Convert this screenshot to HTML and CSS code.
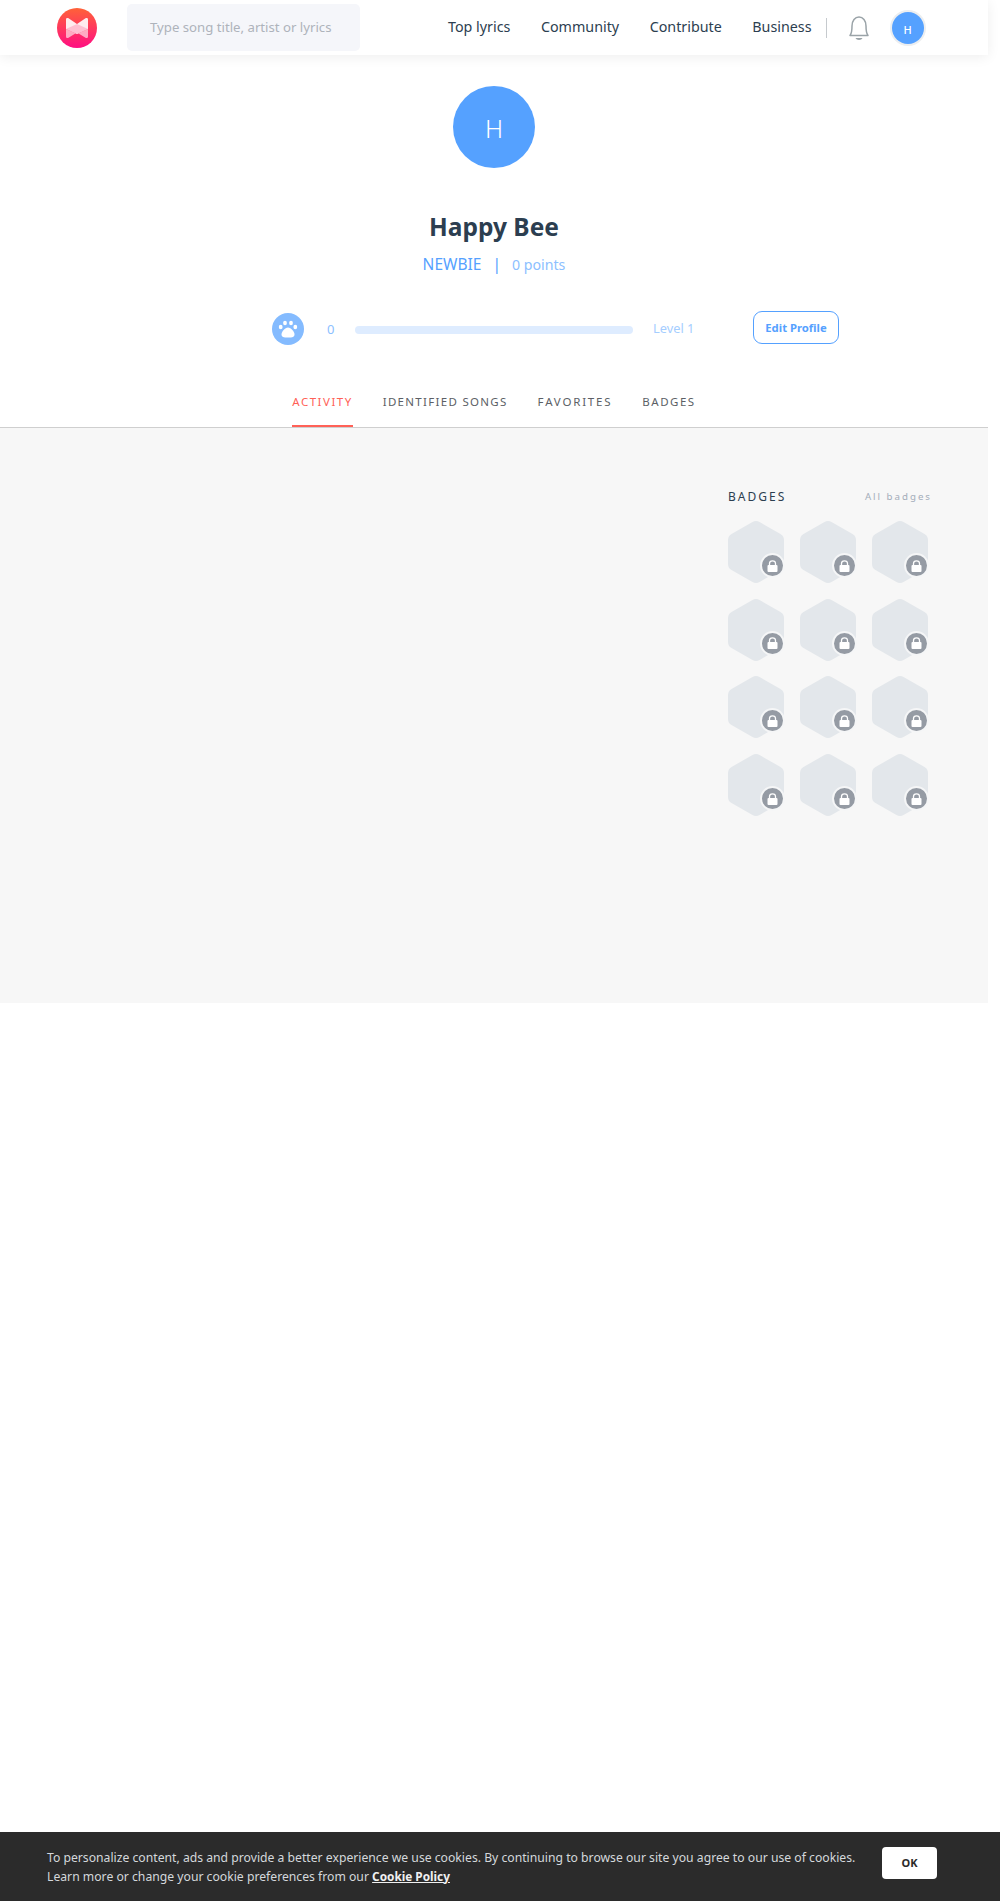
FILE: index.html
```html
<!doctype html>
<html lang="en">
<head>
    <meta charset="UTF-8">
    <title>Happy Bee - Profile</title>
    <link rel="stylesheet" href="styles.css">
</head>
<body>
<div id="page">
    <header id="header">
        <a class="logo" href="#">
            <svg width="40" height="40" viewBox="0 0 40 40">
                <defs>
                    <linearGradient id="logoGrad" x1="0" y1="0" x2="0" y2="1">
                        <stop offset="0" stop-color="#ff6238"/>
                        <stop offset="1" stop-color="#ff0e83"/>
                    </linearGradient>
                </defs>
                <circle cx="20" cy="20" r="20" fill="url(#logoGrad)"/>
                <path d="M9 11.500C9 10 10.500 9.700 11.500 10.300L20 16L28.500 10.300C29.500 9.700 31 10 31 11.500L31 21L20 26L9 21Z" fill="#fff" fill-opacity=".9"/>
                <path d="M9 21L20 26L31 21L31 28.500C31 30 29.500 30.300 28.500 29.700L20 24.500L11.500 29.700C10.500 30.300 9 30 9 28.500Z" fill="#fff" fill-opacity=".6"/>
                <path d="M9 21L20 16L31 21L20 26Z" fill="#ff6f9c" fill-opacity=".35"/>
            </svg>
        </a>
        <div class="search">Type song title, artist or lyrics</div>
        <ul class="nav">
            <li>Top lyrics</li>
            <li>Community</li>
            <li>Contribute</li>
            <li>Business</li>
        </ul>
        <span class="divider"></span>
        <svg class="bell" width="22" height="26" viewBox="0 0 22 26">
            <path d="M2 20.500C4 18 4 16 4 11C4 5.500 7 2 11 2C15 2 18 5.500 18 11C18 16 18 18 20 20.500Z" fill="none" stroke="#9aa3a8" stroke-width="1.500" stroke-linejoin="round"/>
            <path d="M7.500 23L14.500 23C13.500 25.500 8.500 25.500 7.500 23Z" fill="#9aa3a8"/>
        </svg>
        <div class="mini-avatar">H</div>
    </header>

    <section class="profile">
        <div class="avatar">H</div>
        <h1 class="name">Happy Bee</h1>
        <div class="rank">
            <span class="rank-title">NEWBIE</span>
            <span class="rank-sep">|</span>
            <span class="rank-points">0 points</span>
        </div>
        <div class="level">
            <div class="paw">
                <svg width="20" height="18" viewBox="0 0 20 18">
                    <ellipse cx="2.700" cy="7" rx="1.900" ry="2.200" fill="#fff"/>
                    <ellipse cx="7" cy="3" rx="1.900" ry="2.300" fill="#fff"/>
                    <ellipse cx="13" cy="3" rx="1.900" ry="2.300" fill="#fff"/>
                    <ellipse cx="17.300" cy="7" rx="1.900" ry="2.200" fill="#fff"/>
                    <path d="M10 7.500C13 7.500 16.500 11.500 16.500 14.500C16.500 17 14.500 17.500 10 17.500C5.500 17.500 3.500 17 3.500 14.500C3.500 11.500 7 7.500 10 7.500Z" fill="#fff"/>
                </svg>
            </div>
            <span class="level-num">0</span>
            <div class="level-bar"></div>
            <span class="level-name">Level 1</span>
            <a class="edit-btn" href="#">Edit Profile</a>
        </div>
        <ul class="tabs">
            <li class="selected">ACTIVITY</li>
            <li>IDENTIFIED SONGS</li>
            <li>FAVORITES</li>
            <li>BADGES</li>
        </ul>
    </section>

    <section class="content">
        <aside class="side">
            <div class="side-head">
                <span class="side-title">BADGES</span>
                <a class="side-link" href="#">All badges</a>
            </div>
            <div class="badges" id="badges"></div>
        </aside>
    </section>
</div>

<div class="cookie">
    <p>To personalize content, ads and provide a better experience we use cookies. By continuing to browse our site you agree to our use of cookies.<br>Learn more or change your cookie preferences from our <a href="#">Cookie Policy</a></p>
    <button class="ok">OK</button>
</div>

<script>
    var oBadges = document.getElementById("badges");
    var html = "";
    for(var i=0; i<12; i++){
        html += '<div class="badge">'
            + '<svg width="56" height="62" viewBox="0 0 56 62"><path d="M24.500 1L3.500 13Q0 15 0 19L0 43Q0 47 3.500 49L24.500 61Q28 63 31.500 61L52.500 49Q56 47 56 43L56 19Q56 15 52.500 13L31.500 1Q28 -1 24.500 1Z" fill="#e3e7eb"/></svg>'
            + '<span class="lock"><svg width="11" height="12" viewBox="0 0 11 12"><path d="M2.500 5L2.500 3.500C2.500 1.800 3.800 .8 5.500 .8C7.200 .8 8.500 1.800 8.500 3.500L8.500 5" fill="none" stroke="#fff" stroke-width="1.300"/><rect x="0.500" y="5" width="10" height="7" rx="1" fill="#fff"/></svg></span>'
            + '</div>';
    }
    oBadges.innerHTML = html;
</script>
</body>
</html>
```

FILE: styles.css
```css
*{
    padding: 0;
    margin: 0;
    box-sizing: border-box;
}
li{
    list-style: none;
}
a{
    text-decoration: none;
}
html, body{
    height: 100%;
}
body{
    position: relative;
    height: 1901px;
    overflow: hidden;
    background: #fff;
    font-family: "Noto Sans", "Open Sans", sans-serif;
    color: #2c3e50;
}
#page{
    width: 988px;
}

/* header */
#header{
    height: 55px;
    display: flex;
    align-items: center;
    padding-left: 57px;
    background: #fff;
    box-shadow: 0 2px 12px rgba(0,0,0,.07);
}
.logo{
    display: flex;
    width: 40px;
    height: 40px;
}
.search{
    width: 233px;
    height: 47px;
    margin-left: 30px;
    padding-left: 23px;
    line-height: 47px;
    font-size: 13.200px;
    color: #aeb3bb;
    background: #f5f6fa;
    border-radius: 5px;
}
.nav{
    display: flex;
    margin-left: 88px;
    margin-top: -2px;
    gap: 30.500px;
}
.nav li{
    font-size: 14.300px;
    color: #2c3e50;
}
.divider{
    width: 1px;
    height: 20px;
    margin-left: 14px;
    background: #c6cace;
}
.bell{
    margin-left: 21px;
}
.mini-avatar{
    width: 32px;
    height: 32px;
    margin-left: 22px;
    border-radius: 50%;
    background: #55a1ff;
    box-shadow: 0 0 0 2px #eceef0;
    color: #fff;
    font-size: 11px;
    font-weight: 500;
    text-align: center;
    line-height: 35px;
}

/* profile head */
.profile{
    height: 373px;
    padding-top: 31px;
    border-bottom: 1px solid #cfcfcf;
    display: flex;
    flex-direction: column;
    align-items: center;
}
.avatar{
    width: 82px;
    height: 82px;
    border-radius: 50%;
    background: #55a1ff;
    color: #fff;
    font-size: 25px;
    font-weight: 300;
    text-align: center;
    line-height: 84px;
    flex: none;
}
.name{
    margin-top: 41px;
    font-size: 24.500px;
    font-weight: 700;
    line-height: 36px;
    color: #2c3e50;
}
.rank{
    display: flex;
    align-items: baseline;
    margin-top: 9px;
    font-size: 15.500px;
    line-height: 20px;
}
.rank-title{
    color: #55a1ff;
}
.rank-sep{
    margin: 0 11px;
    color: #55a1ff;
}
.rank-points{
    font-size: 14.200px;
    color: #8cc0ff;
}
.level{
    width: 100%;
    display: flex;
    align-items: center;
    margin-top: 37px;
    padding-left: 272px;
    height: 34px;
}
.paw{
    width: 32px;
    height: 32px;
    border-radius: 50%;
    background: #84bbff;
    display: flex;
    align-items: center;
    justify-content: center;
    flex: none;
}
.level-num{
    width: 51px;
    padding-left: 23px;
    font-size: 13px;
    color: #8cc0ff;
}
.level-bar{
    width: 278px;
    height: 8px;
    background: #deecff;
    border-radius: 4px;
    margin-top: 3px;
}
.level-name{
    width: 120px;
    padding-left: 20px;
    margin-top: -2px;
    font-size: 12.800px;
    color: #a5ceff;
}
.edit-btn{
    width: 86px;
    height: 33px;
    margin-top: -2px;
    border: 1px solid #55a1ff;
    border-radius: 9px;
    text-align: center;
    line-height: 31px;
    font-size: 11.300px;
    font-weight: 700;
    color: #55a1ff;
}
.tabs{
    display: flex;
    gap: 30px;
    margin-top: 27px;
}
.tabs li{
    height: 55px;
    padding-top: 20px;
    line-height: 20px;
    font-size: 11.500px;
    letter-spacing: 1.500px;
    color: #5c5f66;
}
.tabs li:nth-child(2){
    letter-spacing: 1.300px;
}
.tabs li:nth-child(3){
    letter-spacing: 1.800px;
}
.tabs .selected{
    color: #ff6157;
    border-bottom: 2px solid #ff6157;
}

/* grey content */
.content{
    height: 575px;
    background: #f7f7f7;
    padding: 59px 0 0 728px;
}
.side{
    width: 204px;
}
.side-head{
    display: flex;
    justify-content: space-between;
    align-items: center;
    height: 18px;
}
.side-title{
    font-size: 12px;
    letter-spacing: 2px;
    color: #2c3e50;
}
.side-link{
    font-size: 9.700px;
    letter-spacing: 2px;
    color: #a4adba;
}
.badges{
    display: grid;
    grid-template-columns: repeat(3, 56px);
    column-gap: 16px;
    row-gap: 15.700px;
    margin-top: 16px;
}
.badge{
    position: relative;
    width: 56px;
    height: 62px;
}
.badge svg{
    display: block;
}
.lock{
    position: absolute;
    left: 32px;
    top: 32px;
    width: 25px;
    height: 25px;
    border-radius: 50%;
    border: 2px solid #f5f6f7;
    background: #959ba4;
    display: flex;
    align-items: center;
    justify-content: center;
}

/* cookie bar */
.cookie{
    position: absolute;
    left: 0;
    right: 0;
    bottom: 0;
    height: 69px;
    display: flex;
    align-items: center;
    padding: 0 63px 0 47px;
    background: #2b2b2b;
}
.cookie p{
    flex: 1;
    font-size: 12.200px;
    line-height: 19px;
    color: #d4d8dc;
}
.cookie a{
    font-size: 11.800px;
    color: #f0f0f0;
    font-weight: 700;
    text-decoration: underline;
}
.ok{
    width: 55px;
    height: 32px;
    margin-top: -8px;
    border: 0;
    border-radius: 4px;
    background: #fff;
    font-family: inherit;
    font-size: 11px;
    font-weight: 700;
    color: #2b2b2b;
}
```
